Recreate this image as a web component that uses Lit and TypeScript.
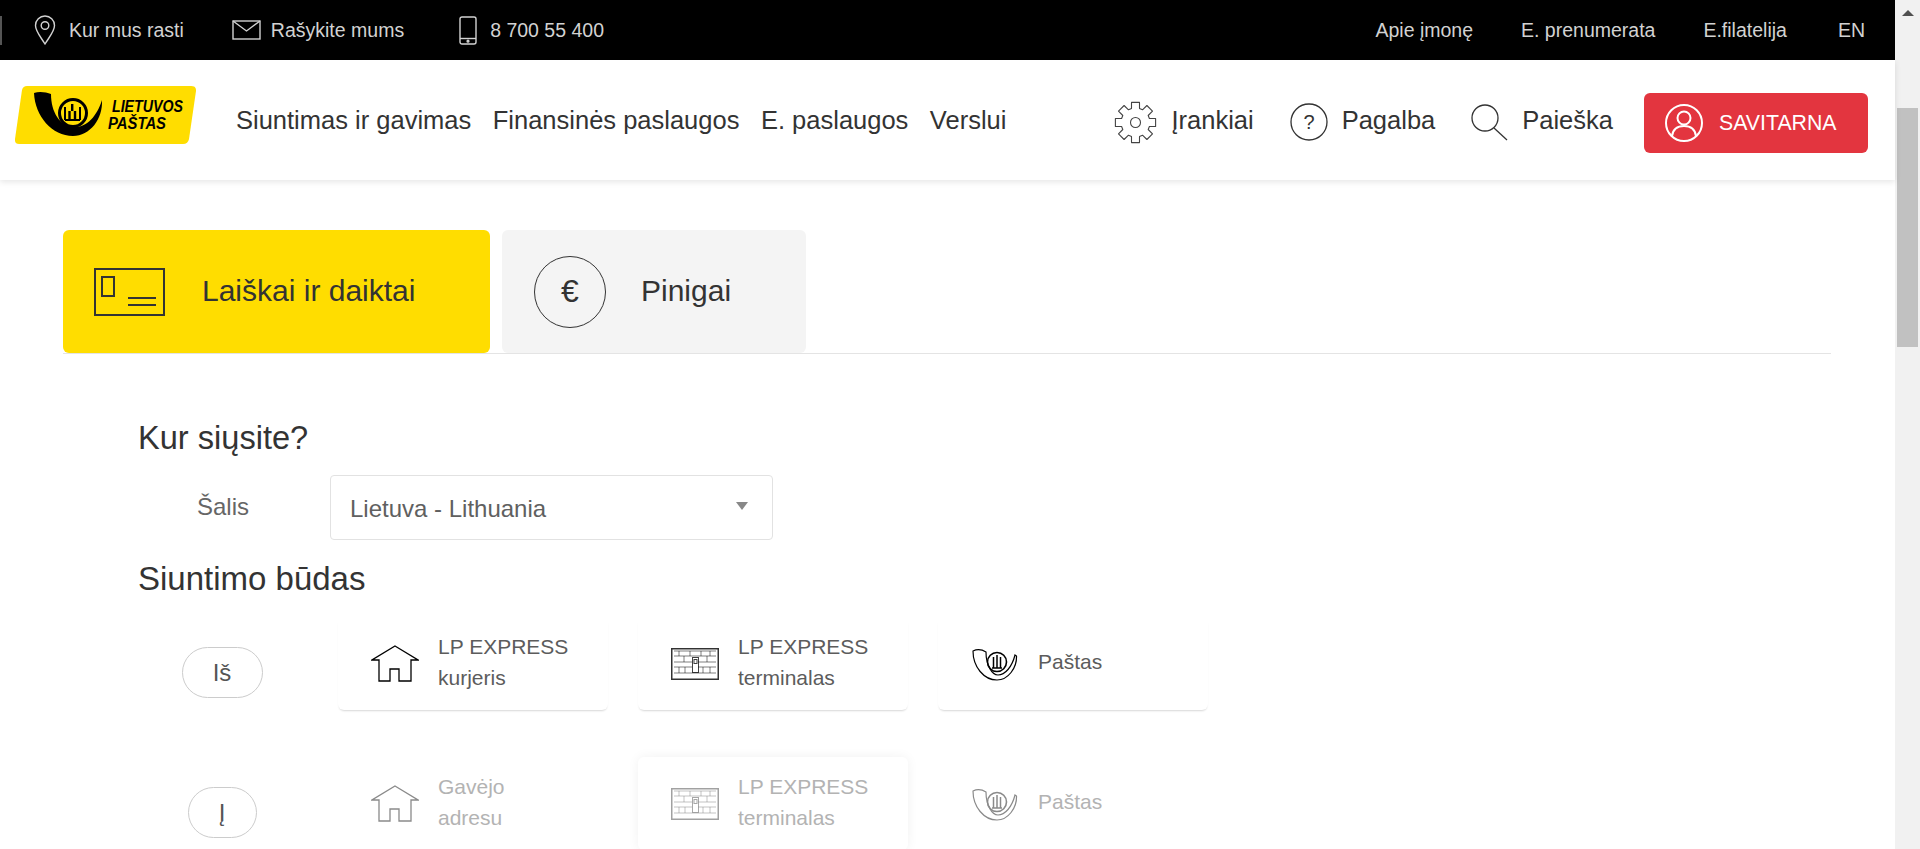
import { LitElement, html, css, svg } from "lit";
import { customElement } from "lit/decorators.js";

const gearPath = () => {
  // 8 wide teeth, outline computed around the centre
  const pts: string[] = [];
  const teeth = 8;
  for (let i = 0; i < teeth; i++) {
    const a = (i * Math.PI * 2) / teeth - Math.PI / 2;
    const step = Math.PI / teeth;
    const rows: [number, number][] = [
      [14.5, -step * 0.72],
      [20.5, -step * 0.5],
      [20.5, step * 0.5],
      [14.5, step * 0.72],
    ];
    for (const [r, d] of rows) {
      pts.push(`${(21.5 + r * Math.cos(a + d)).toFixed(1)} ${(21.5 + r * Math.sin(a + d)).toFixed(1)}`);
    }
  }
  return "M" + pts.join("L") + "Z";
};

const houseIcon = html`<svg width="48" height="38" viewBox="0 0 48 38" fill="none" stroke="currentColor" stroke-width="1.3">
  <path d="M24 1 L47 15 H40 V36 H28 V24 H19 V36 H8 V15 H1 Z" />
</svg>`;

const terminalIcon = html`<svg width="48" height="32" viewBox="0 0 48 32" fill="none" stroke="currentColor" stroke-width="1">
  <rect x="0.750" y="0.750" width="46.500" height="30.500" stroke-width="1.500" stroke-opacity=".8" />
  <path d="M3 3H45M3 8H45M3 14H21M27 14H45M3 19H21M27 19H45M3 25H45" stroke-opacity=".5" />
  <path d="M8 3V8M19 3V8M30 3V8M39 3V8M13 8V14M36 8V14M8 19V25M14 19V25M32 19V25M39 19V25" stroke-opacity=".5" />
  <rect x="21.500" y="9.500" width="6" height="15" stroke-opacity=".75" />
  <rect x="23" y="11.500" width="3" height="4" stroke-opacity=".75" />
</svg>`;

const hornIcon = html`<svg width="49" height="34" viewBox="0 0 49 34" fill="none" stroke="currentColor">
  <path d="M2 4 C6 2 11 2.500 15 5 C15 18 21 28 27 28 C34 28 41 20 44 8 L45.500 9 C46 21 37 33 26 33 C13 33 2 20 2 4Z" stroke-width="1.200" />
  <circle cx="26" cy="15" r="9.500" stroke-width="1.600" />
  <path d="M22.500 10V21M26 8V21M29.500 10V21M21 21H31" stroke-width="1.500" />
</svg>`;

const routeCards = (first: string, disabled: boolean) => {
  const cards = [
    { icon: houseIcon, lines: first.split("|") },
    { icon: terminalIcon, lines: ["LP EXPRESS", "terminalas"] },
    { icon: hornIcon, lines: ["Paštas"] },
  ];
  return cards.map(
    (c, i) => html`<div class="card ${disabled ? "off" : ""} ${disabled && i === 1 ? "raised" : ""}">
      <div class="card-icon">${c.icon}</div>
      <div class="card-text">${c.lines.map((l) => html`<div>${l}</div>`)}</div>
    </div>`
  );
};

@customElement("app-root")
export class AppRoot extends LitElement {
  static styles = css`
    :host {
      display: flex;
      width: 1920px;
      height: 849px;
      overflow: hidden;
      background: #fff;
      color: #333;
      font-family: "Liberation Sans", Arial, sans-serif;
    }

    .page {
      width: 1895px;
      flex: none;
    }

    .scrollbar {
      width: 25px;
      flex: none;
      background: #f1f1f1;
      display: flex;
      flex-direction: column;
      align-items: center;
      padding-top: 10px;
      box-sizing: border-box;
    }

    .scroll-arrow {
      width: 0;
      height: 0;
      border-left: 6px solid transparent;
      border-right: 6px solid transparent;
      border-bottom: 6px solid #505050;
    }

    .scroll-thumb {
      width: 21px;
      height: 239px;
      margin-top: 92px;
      background: #c1c1c1;
    }

    /* top bar */
    .topbar {
      height: 60px;
      background: #000;
      color: #d2d2d2;
      font-size: 19.5px;
      display: flex;
      align-items: center;
      position: relative;
    }

    .edge-mark {
      width: 2px;
      height: 29px;
      background: #555;
      margin-right: 32px;
      flex: none;
    }

    .top-left,
    .top-right {
      display: flex;
      align-items: center;
    }

    .top-right {
      margin-left: auto;
      padding-right: 30px;
      gap: 48px;
    }

    .top-right .lang {
      margin-left: 3px;
    }

    .top-item {
      display: flex;
      align-items: center;
      gap: 10px;
    }

    .top-item svg {
      display: block;
    }

    .top-item.mail {
      margin-left: 48px;
    }

    .top-item.phone {
      margin-left: 55px;
      gap: 13px;
    }

    .top-item.pin {
      gap: 13px;
    }

    /* main header */
    .header {
      height: 120px;
      display: flex;
      align-items: center;
      padding: 0 27px 0 15px;
      box-shadow: 0 2px 6px rgba(0, 0, 0, 0.1);
      position: relative;
    }

    .logo {
      display: block;
      margin-top: -10px;
      flex: none;
    }

    .logo text {
      font-family: "Liberation Sans", Arial, sans-serif;
      font-weight: 700;
      font-style: italic;
      font-size: 16px;
    }

    .nav {
      display: flex;
      gap: 21.5px;
      margin-left: 40px;
      font-size: 25.5px;
    }

    .tools {
      display: flex;
      align-items: center;
      margin-left: auto;
      font-size: 25.5px;
    }

    .tool {
      display: flex;
      align-items: center;
      gap: 14px;
      margin-right: 36px;
    }

    .tool svg {
      display: block;
      margin-top: 4px;
    }

    .login {
      width: 224px;
      height: 60px;
      margin-left: -5px;
      margin-top: 6px;
      box-sizing: border-box;
      background: #e3353f;
      color: #fff;
      border-radius: 6px;
      display: flex;
      align-items: center;
      gap: 16px;
      padding-left: 21px;
      font-size: 21.3px;
    }

    /* tabs */
    .tabs {
      margin: 50px 64px 0 63px;
      display: flex;
      gap: 12px;
      border-bottom: 1px solid #e4e4e4;
      height: 123px;
    }

    .tab {
      display: flex;
      align-items: center;
      border-radius: 6px;
      font-size: 30px;
      background: #f4f4f4;
      width: 304px;
      padding-left: 32px;
      box-sizing: border-box;
      gap: 35px;
    }

    .tab span {
      margin-top: -2px;
    }

    .tab.active {
      width: 427px;
      background: #ffdd00;
      padding-left: 31px;
      gap: 37px;
    }

    .tab svg {
      display: block;
      flex: none;
    }

    .euro {
      width: 72px;
      height: 72px;
      box-sizing: border-box;
      border: 1.7px solid #333;
      border-radius: 50%;
      display: flex;
      align-items: center;
      justify-content: center;
      font-size: 32px;
      flex: none;
    }

    /* form */
    .form {
      margin: 66px 0 0 138px;
    }

    h2 {
      margin: 0;
      font-size: 32.6px;
      font-weight: 400;
      line-height: 36px;
      color: #333;
    }

    .country {
      display: flex;
      align-items: center;
      margin-top: 19px;
    }

    .label {
      width: 170px;
      text-align: center;
      font-size: 24px;
      color: #666;
      margin-right: 22px;
      margin-top: -2px;
    }

    .select {
      width: 443px;
      height: 65px;
      box-sizing: border-box;
      border: 1px solid #e2e2e2;
      border-radius: 4px;
      display: flex;
      align-items: center;
      justify-content: space-between;
      padding: 0 24px 0 19px;
      font-size: 24px;
      color: #606060;
    }

    .select span {
      margin-top: 3px;
    }

    .caret {
      width: 0;
      height: 0;
      border-left: 6px solid transparent;
      border-right: 6px solid transparent;
      border-top: 8px solid #888;
      margin-top: -3px;
    }

    .form h2.second {
      margin-top: 21px;
      font-size: 33px;
    }

    .routes {
      margin-top: 20px;
      display: flex;
      flex-direction: column;
      gap: 47px;
    }

    .route {
      display: flex;
      align-items: flex-start;
    }

    .pill-box {
      width: 168px;
      margin-right: 32px;
      padding-top: 30px;
      display: flex;
      justify-content: center;
    }

    .pill {
      height: 51px;
      box-sizing: border-box;
      border: 1px solid #ccc;
      border-radius: 26px;
      display: flex;
      align-items: center;
      justify-content: center;
      font-size: 24px;
      color: #555;
      width: 81px;
    }

    .pill.short {
      width: 69px;
    }

    .cards {
      display: flex;
      gap: 30px;
    }

    .card {
      width: 270px;
      height: 93px;
      box-sizing: border-box;
      border-radius: 6px;
      padding-left: 33px;
      display: flex;
      align-items: center;
      color: #000;
      box-shadow: 0 2px 2px -1px rgba(0, 0, 0, 0.16);
    }

    .card.off {
      box-shadow: none;
      color: #8a8a8a;
    }

    .card.raised {
      box-shadow: 0 0 12px rgba(0, 0, 0, 0.06);
    }

    .card-icon {
      width: 67px;
      flex: none;
    }

    .card-icon svg {
      display: block;
    }

    .card-text {
      font-size: 21px;
      line-height: 30.5px;
      color: #5c5c5c;
      margin-top: -2px;
    }

    .card.off .card-text {
      color: #b3b3b3;
    }
  `;

  render() {
    return html`<div class="page">
        <div class="topbar">
          <div class="edge-mark"></div>
          <div class="top-left">
            <div class="top-item pin">
              <svg width="22" height="30" viewBox="0 0 22 30" fill="none" stroke="#d2d2d2" stroke-width="1.4">
                <path d="M11 29 C6 21 1.500 16 1.500 10.500 A9.500 9.500 0 0 1 20.500 10.500 C20.500 16 16 21 11 29Z" />
                <circle cx="11" cy="10.500" r="3.800" />
              </svg>
              <span>Kur mus rasti</span>
            </div>
            <div class="top-item mail">
              <svg width="29" height="20" viewBox="0 0 29 20" fill="none" stroke="#d2d2d2" stroke-width="1.4">
                <rect x="1" y="1" width="27" height="18" />
                <path d="M1 1 L14.500 11 L28 1" />
              </svg>
              <span>Rašykite mums</span>
            </div>
            <div class="top-item phone">
              <svg width="18" height="29" viewBox="0 0 18 29" fill="none" stroke="#d2d2d2" stroke-width="1.4">
                <rect x="1" y="1" width="16" height="27" rx="2" />
                <path d="M1 22.500 H17" />
                <circle cx="9" cy="25.200" r="0.900" fill="#d2d2d2" />
              </svg>
              <span>8 700 55 400</span>
            </div>
          </div>
          <div class="top-right">
            <span>Apie įmonę</span>
            <span>E. prenumerata</span>
            <span>E.filatelija</span>
            <span class="lang">EN</span>
          </div>
        </div>

        <div class="header">
          <svg class="logo" width="181" height="58" viewBox="0 0 181 58">
            <path d="M12 0 H176 Q181.500 0 181 5 L174 53 Q173 58 168 58 H4 Q-.5 58 0 53 L7 4 Q8 0 12 0Z" fill="#ffdd00" />
            <path d="M19 7 C24 5 31 6 36 8 C36 26 45 41 60 41 C72 41 82 30 87 14 C88 33 75 50 58 50 C37 50 20 30 19 7Z" fill="#000" />
            <circle cx="58" cy="27" r="13.500" fill="none" stroke="#000" stroke-width="3" />
            <path d="M50 21V34M65 21V34M50 34H65" fill="none" stroke="#000" stroke-width="2" />
            <path d="M54.500 25V34M60 25V34M57.200 18V25" fill="none" stroke="#000" stroke-width="2.400" />
            <text x="97" y="26" textLength="71" lengthAdjust="spacingAndGlyphs">LIETUVOS</text>
            <text x="93" y="43" textLength="58" lengthAdjust="spacingAndGlyphs">PAŠTAS</text>
          </svg>
          <div class="nav">
            <span>Siuntimas ir gavimas</span>
            <span>Finansinės paslaugos</span>
            <span>E. paslaugos</span>
            <span>Verslui</span>
          </div>
          <div class="tools">
            <div class="tool">
              <svg width="43" height="43" viewBox="0 0 43 43" fill="none" stroke="#444" stroke-width="1.100">
                ${svg`<path d=${gearPath()} stroke-linejoin="round" />`}
                <circle cx="21.500" cy="21.500" r="5" />
              </svg>
              <span>Įrankiai</span>
            </div>
            <div class="tool">
              <svg width="38" height="38" viewBox="0 0 38 38" fill="none">
                <circle cx="19" cy="19" r="18" stroke="#333" stroke-width="1.300" />
                <text x="19" y="26" text-anchor="middle" font-size="20" fill="#333" font-family="Liberation Sans, Arial, sans-serif">?</text>
              </svg>
              <span>Pagalba</span>
            </div>
            <div class="tool">
              <svg width="37" height="37" viewBox="0 0 37 37" fill="none" stroke="#333" stroke-width="1.300">
                <circle cx="14" cy="14" r="13" />
                <path d="M23 24 L36 36" />
              </svg>
              <span>Paieška</span>
            </div>
            <div class="login">
              <svg width="38" height="38" viewBox="0 0 38 38" fill="none" stroke="#fff" stroke-width="2">
                <circle cx="19" cy="19" r="18" />
                <circle cx="19" cy="14" r="6.500" />
                <path d="M7 32 C8 25 13 22 19 22 C25 22 30 25 31 32" />
              </svg>
              <span>SAVITARNA</span>
            </div>
          </div>
        </div>

        <div class="tabs">
          <div class="tab active">
            <svg width="71" height="48" viewBox="0 0 71 48" fill="none" stroke="#333" stroke-width="2">
              <rect x="1" y="1" width="69" height="46" />
              <rect x="8" y="9" width="12" height="19" />
              <path d="M34 30 H62 M34 37 H62" />
            </svg>
            <span>Laiškai ir daiktai</span>
          </div>
          <div class="tab">
            <div class="euro">€</div>
            <span>Pinigai</span>
          </div>
        </div>

        <div class="form">
          <h2>Kur siųsite?</h2>
          <div class="country">
            <div class="label">Šalis</div>
            <div class="select">
              <span>Lietuva - Lithuania</span>
              <div class="caret"></div>
            </div>
          </div>
          <h2 class="second">Siuntimo būdas</h2>
          <div class="routes">
            <div class="route">
              <div class="pill-box"><div class="pill">Iš</div></div>
              <div class="cards">${routeCards("LP EXPRESS|kurjeris", false)}</div>
            </div>
            <div class="route">
              <div class="pill-box"><div class="pill short">Į</div></div>
              <div class="cards">${routeCards("Gavėjo|adresu", true)}</div>
            </div>
          </div>
        </div>
      </div>
      <div class="scrollbar">
        <div class="scroll-arrow"></div>
        <div class="scroll-thumb"></div>
      </div>`;
  }
}
